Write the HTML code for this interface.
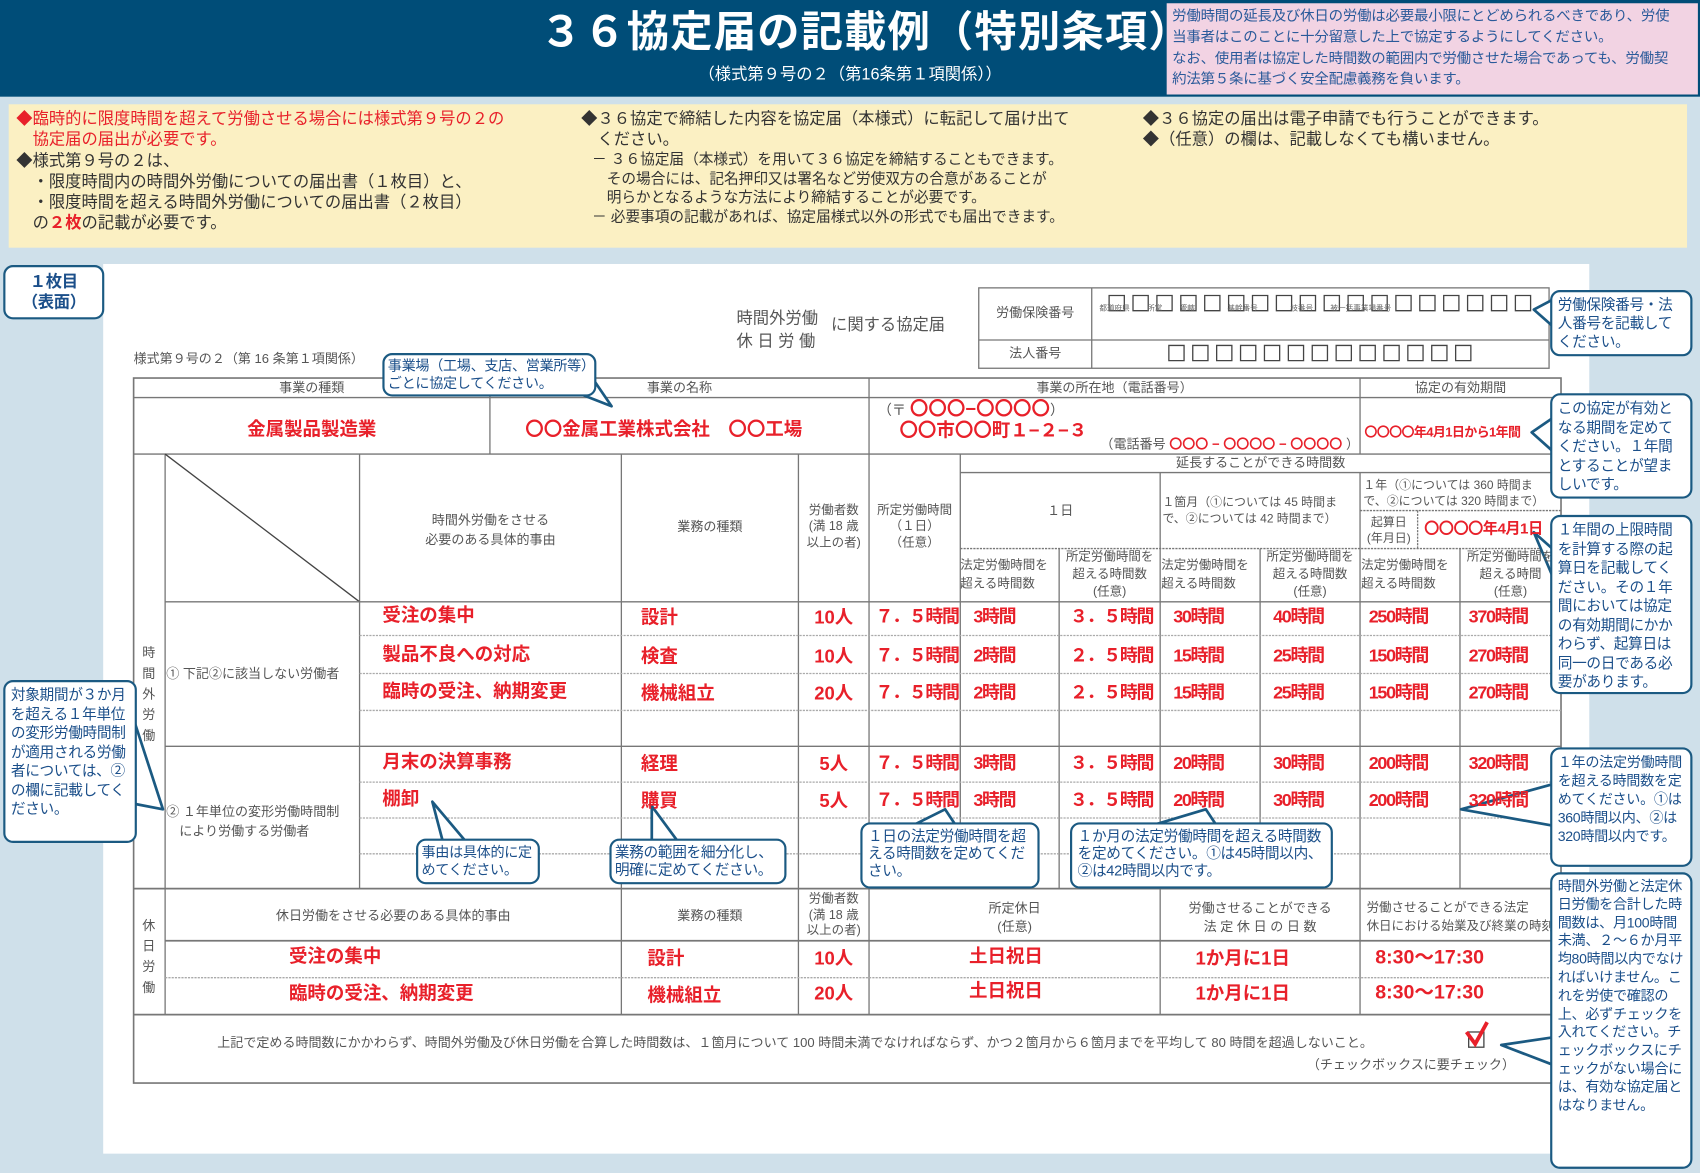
<!DOCTYPE html>
<html><head><meta charset="utf-8"><style>
*{margin:0;padding:0;box-sizing:border-box}
html,body{width:1700px;height:1172px;overflow:hidden;background:#cfe0ea}
body{font-family:"Liberation Sans","Noto Sans CJK JP",sans-serif}
#w{position:absolute;left:0;top:0;width:1565px;height:1080px;transform:scale(1.0863);transform-origin:0 0}
.a{position:absolute;white-space:nowrap;line-height:1.2}
.g{color:#555;font-size:12px}
.r{color:#e8202a;font-weight:bold;font-size:17px}
.n{letter-spacing:-1.2px;font-size:16.5px}
.c{text-align:center}
.co{position:absolute;background:#fff;border:2.5px solid #1b5a82;border-radius:9px;color:#1b4f8a;font-size:13.5px;line-height:1.32;padding:3px 5px;white-space:normal;letter-spacing:-0.3px}
.y{font-size:15px;color:#333;line-height:19.3px}
</style></head><body><div id="w">
<div style="position:absolute;left:0;top:0;width:1565px;height:89px;background:#004d78"></div>
<div class="a" style="left:497px;top:8px;color:#fff;font-size:39px;font-weight:bold;letter-spacing:1px">３６協定届の記載例（特別条項）</div>
<div class="a" style="left:643px;top:60px;color:#fff;font-size:15px">（様式第９号の２（第16条第１項関係））</div>
<div style="position:absolute;left:1074px;top:3px;width:489px;height:84px;background:#f2d3e3;color:#2a5a9a;font-size:13.3px;line-height:18.5px;padding:3px 22px 3px 5px;letter-spacing:-0.2px">労働時間の延長及び休日の労働は必要最小限にとどめられるべきであり、労使当事者はこのことに十分留意した上で協定するようにしてください。<div style="margin-top:2px">なお、使用者は協定した時間数の範囲内で労働させた場合であっても、労働契約法第５条に基づく安全配慮義務を負います。</div></div>

<div style="position:absolute;left:8px;top:96px;width:1545px;height:132px;background:#fbf0c3"></div>
<div class="a y" style="left:15px;top:100px"><span style="color:#e8202a">◆臨時的に限度時間を超えて労働させる場合には様式第９号の２の<br>　協定届の届出が必要です。</span><br>◆様式第９号の２は、<br>　・限度時間内の時間外労働についての届出書（１枚目）と、<br>　・限度時間を超える時間外労働についての届出書（２枚目）<br>　の<b style="color:#e8202a">２枚</b>の記載が必要です。</div>
<div class="a y" style="left:535px;top:100px">◆３６協定で締結した内容を協定届（本様式）に転記して届け出て<br>　ください。</div>
<div class="a" style="left:545px;top:138px;font-size:13.5px;line-height:17.5px;color:#333">－ ３６協定届（本様式）を用いて３６協定を締結することもできます。<br>　その場合には、記名押印又は署名など労使双方の合意があることが<br>　明らかとなるような方法により締結することが必要です。<br>－ 必要事項の記載があれば、協定届様式以外の形式でも届出できます。</div>
<div class="a y" style="left:1052px;top:100px">◆３６協定の届出は電子申請でも行うことができます。<br>◆（任意）の欄は、記載しなくても構いません。</div>

<div style="position:absolute;left:95px;top:243px;width:1368px;height:819px;background:#fff"></div>
<div class="co" style="left:3px;top:244px;width:93px;height:50px;text-align:center;font-weight:bold;font-size:15px;line-height:19px;padding-top:4px">１枚目<br>（表面）</div>

<div class="a" style="left:678px;top:283px;font-size:15px;color:#555;line-height:21px">時間外労働<br>休 日 労 働</div>
<div class="a" style="left:765px;top:291px;font-size:15px;color:#555">に関する協定届</div>
<div class="a g" style="left:123px;top:323px">様式第９号の２（第 16 条第１項関係）</div>

<svg style="position:absolute;left:0;top:0" width="1565" height="1080">
<g stroke="#777" stroke-width="1.2" fill="none">
<rect x="901" y="265" width="525" height="74"/><line x1="901" y1="313" x2="1426" y2="313"/><line x1="1005" y1="265" x2="1005" y2="339"/>
<rect x="123" y="348" width="1314" height="649" stroke-width="1.5"/>
<line x1="123" y1="366" x2="1437" y2="366"/><line x1="123" y1="418" x2="1437" y2="418"/>
<line x1="451" y1="348" x2="451" y2="418"/><line x1="800" y1="348" x2="800" y2="418"/><line x1="1252" y1="348" x2="1252" y2="418"/>
<line x1="152" y1="418" x2="152" y2="934"/>
<line x1="331" y1="418" x2="331" y2="818"/><line x1="572" y1="418" x2="572" y2="934"/><line x1="735" y1="418" x2="735" y2="934"/><line x1="800" y1="418" x2="800" y2="934"/>
<line x1="884" y1="418" x2="884" y2="818"/><line x1="975" y1="505" x2="975" y2="818"/><line x1="1068" y1="435" x2="1068" y2="934"/><line x1="1160" y1="505" x2="1160" y2="818"/><line x1="1252" y1="435" x2="1252" y2="934"/><line x1="1344" y1="505" x2="1344" y2="818"/>
<line x1="884" y1="435" x2="1437" y2="435"/><line x1="884" y1="505" x2="1437" y2="505" stroke-dasharray="2 1"/><line x1="1252" y1="470" x2="1437" y2="470" stroke-dasharray="2 1"/><line x1="1305" y1="470" x2="1305" y2="505" stroke-dasharray="2 1"/>
<line x1="152" y1="418" x2="331" y2="554" stroke="#444"/>
<line x1="152" y1="554" x2="1437" y2="554"/>
<line x1="152" y1="687" x2="1437" y2="687"/>
<line x1="123" y1="818" x2="1437" y2="818" stroke-width="1.6"/>
<line x1="152" y1="866" x2="1437" y2="866" stroke-width="1.6"/>
<line x1="123" y1="934" x2="1437" y2="934" stroke-width="1.6"/>
<g stroke="#aaa" stroke-dasharray="2 1">
<line x1="331" y1="585" x2="1437" y2="585"/><line x1="331" y1="620" x2="1437" y2="620"/><line x1="331" y1="654" x2="1437" y2="654"/>
<line x1="331" y1="720" x2="1437" y2="720"/><line x1="331" y1="753" x2="1437" y2="753"/><line x1="331" y1="786" x2="1437" y2="786"/>
<line x1="152" y1="900" x2="1437" y2="900"/></g>
</g>
<g stroke="#444" stroke-width="1.2" fill="none">
<path d="M1021 272h14v14h-14zM1043 272h14v14h-14zM1065 272h14v14h-14zM1087 272h14v14h-14zM1109 272h14v14h-14zM1131 272h14v14h-14zM1153 272h14v14h-14zM1175 272h14v14h-14zM1197 272h14v14h-14zM1219 272h14v14h-14zM1241 272h14v14h-14zM1263 272h14v14h-14zM1285 272h14v14h-14zM1307 272h14v14h-14zM1329 272h14v14h-14zM1351 272h14v14h-14zM1373 272h14v14h-14zM1395 272h14v14h-14z"/>
<path d="M1076 318h14v14h-14zM1098 318h14v14h-14zM1120 318h14v14h-14zM1142 318h14v14h-14zM1164 318h14v14h-14zM1186 318h14v14h-14zM1208 318h14v14h-14zM1230 318h14v14h-14zM1252 318h14v14h-14zM1274 318h14v14h-14zM1296 318h14v14h-14zM1318 318h14v14h-14zM1340 318h14v14h-14z"/>
<rect x="1352" y="950" width="14" height="14"/></g>
<path d="M1350 950l8 11 11-20" stroke="#e8202a" stroke-width="3.5" fill="none"/>
<g fill="#fff" stroke="#1b5a82" stroke-width="2.5" stroke-linejoin="round">
<path d="M535 363 L563 374 L548 352Z"/>
<path d="M398 738 L408 776 L430 776Z"/>
<path d="M600 742 L600 776 L625 776Z"/>
<path d="M870 745 L840 760 L880 760Z"/>
<path d="M1110 745 L1060 760 L1120 760Z"/>
<path d="M1412 285 L1429 276 L1429 300Z"/>
<path d="M1410 398 L1429 385 L1429 415Z"/>
<path d="M1412 490 L1429 505 L1429 530Z"/>
<path d="M1345 745 L1429 722 L1429 760Z"/>
<path d="M1382 962 L1429 955 L1429 980Z"/>
<path d="M150 745 L124 665 L124 740Z"/>
</g>
</svg>

<div class="a" style="left:1012px;top:281px;font-size:7px;color:#666;word-spacing:14px">都道府県 所掌 管轄 　　基幹番号　　 枝番号 被一括事業場番号</div>
<div class="a g c" style="left:901px;top:281px;width:104px">労働保険番号</div>
<div class="a g c" style="left:901px;top:318px;width:104px">法人番号</div>

<div class="a g c" style="left:123px;top:350px;width:328px">事業の種類</div>
<div class="a g c" style="left:451px;top:350px;width:349px">事業の名称</div>
<div class="a g c" style="left:800px;top:350px;width:452px">事業の所在地（電話番号）</div>
<div class="a g c" style="left:1252px;top:350px;width:185px">協定の有効期間</div>
<div class="a r c" style="left:123px;top:386px;width:328px">金属製品製造業</div>
<div class="a r c" style="left:451px;top:386px;width:320px">〇〇金属工業株式会社　〇〇工場</div>
<div class="a g" style="left:808px;top:367px;font-size:13px">（〒 <span class="r" style="font-size:17px">〇〇〇−〇〇〇〇</span>）</div>
<div class="a r" style="left:828px;top:387px">〇〇市〇〇町１−２−３</div>
<div class="a g" style="left:1013px;top:402px">（電話番号 <span style="color:#e8202a;font-weight:bold;font-size:12px">〇〇〇 − 〇〇〇〇 − 〇〇〇〇</span> ）</div>
<div class="a" style="left:1256px;top:391px;color:#e8202a;font-weight:bold;font-size:12px;letter-spacing:-0.6px">〇〇〇〇年4月1日から1年間</div>

<div class="a g c" style="left:884px;top:419px;width:553px">延長することができる時間数</div>
<div class="a g c" style="left:331px;top:470px;width:241px;line-height:18px">時間外労働をさせる<br>必要のある具体的事由</div>
<div class="a g c" style="left:572px;top:478px;width:163px">業務の種類</div>
<div class="a g c" style="left:735px;top:463px;width:65px;font-size:11.5px;line-height:15px">労働者数<br>(満 18 歳<br>以上の者)</div>
<div class="a g c" style="left:800px;top:463px;width:84px;font-size:11.5px;line-height:15px">所定労働時間<br>（１日）<br>（任意）</div>
<div class="a g c" style="left:884px;top:463px;width:184px">１日</div>
<div class="a g" style="left:1070px;top:456px;font-size:11px;line-height:15px">１箇月（①については 45 時間ま<br>で、②については 42 時間まで）</div>
<div class="a g" style="left:1255px;top:440px;font-size:11px;line-height:15px">１年（①については 360 時間ま<br>で、②については 320 時間まで）</div>
<div class="a g c" style="left:1252px;top:474px;width:53px;font-size:11px;line-height:15px">起算日<br>(年月日)</div>
<div class="a r" style="left:1311px;top:478px;font-size:14px;letter-spacing:-0.5px">〇〇〇〇年4月1日</div>
<div class="a g" style="left:884px;top:513px;font-size:11.5px;line-height:17px">法定労働時間を<br>超える時間数</div>
<div class="a g c" style="left:975px;top:505px;width:93px;font-size:11.5px;line-height:16px">所定労働時間を<br>超える時間数<br>(任意)</div>
<div class="a g" style="left:1069px;top:513px;font-size:11.5px;line-height:17px">法定労働時間を<br>超える時間数</div>
<div class="a g c" style="left:1160px;top:505px;width:92px;font-size:11.5px;line-height:16px">所定労働時間を<br>超える時間数<br>(任意)</div>
<div class="a g" style="left:1253px;top:513px;font-size:11.5px;line-height:17px">法定労働時間を<br>超える時間数</div>
<div class="a g c" style="left:1344px;top:505px;width:93px;font-size:11.5px;line-height:16px;overflow:hidden">所定労働時間を<br>超える時間<br>(任意)</div>

<div class="a g" style="left:131px;top:592px;line-height:19px;width:14px;white-space:normal">時間外労働</div>
<div class="a g" style="left:153px;top:613px">① 下記②に該当しない労働者</div>
<div class="a g" style="left:153px;top:738px;line-height:18px">② １年単位の変形労働時間制<br>　により労働する労働者</div>
<div class="a g" style="left:131px;top:843px;line-height:19px;width:14px;white-space:normal">休日労働</div>

<div id="rows"></div>
<script>
var R=[[557,"受注の集中","設計","10人","3","3.5","30","40","250","370"],[593,"製品不良への対応","検査","10人","2","2.5","15","25","150","270"],[627,"臨時の受注、納期変更","機械組立","20人","2","2.5","15","25","150","270"],[692,"月末の決算事務","経理","5人","3","3.5","20","30","200","320"],[726,"棚卸","購買","5人","3","3.5","20","30","200","320"]];
var h="";R.forEach(function(r){var t=r[0];
h+='<div class="a r" style="left:352px;top:'+t+'px">'+r[1]+'</div>';
h+='<div class="a r" style="left:590px;top:'+(t+2)+'px">'+r[2]+'</div>';
h+='<div class="a r c" style="left:735px;top:'+(t+2)+'px;width:65px">'+r[3]+'</div>';
h+='<div class="a r n" style="left:806px;top:'+(t+2)+'px;width:78px;overflow:hidden">７．５時間</div>';
var xs=[884,975,1068,1160,1252,1344],ws=[91,93,92,92,92,93];
var vs=[r[4]+"時間",(r[5]=="3.5"?"３．５":"２．５")+"時間",r[6]+"時間",r[7]+"時間",r[8]+"時間",r[9]+"時間"];
for(var i=0;i<6;i++)h+='<div class="a r n" style="left:'+(xs[i]+(i==1?10:(i>=4?8:12)))+'px;top:'+(t+2)+'px;width:'+(ws[i]-8)+'px;overflow:hidden">'+vs[i]+'</div>';
});
document.getElementById("rows").innerHTML=h;
</script>

<div class="a g c" style="left:152px;top:836px;width:420px">休日労働をさせる必要のある具体的事由</div>
<div class="a g c" style="left:572px;top:836px;width:163px">業務の種類</div>
<div class="a g c" style="left:735px;top:821px;width:65px;font-size:11.5px;line-height:14.5px">労働者数<br>(満 18 歳<br>以上の者)</div>
<div class="a g c" style="left:800px;top:828px;width:268px;line-height:17px">所定休日<br>(任意)</div>
<div class="a g c" style="left:1068px;top:828px;width:184px;line-height:17px">労働させることができる<br>法 定 休 日 の 日 数</div>
<div class="a g" style="left:1258px;top:828px;width:179px;line-height:17px;overflow:hidden;font-size:11.5px">労働させることができる法定<br>休日における始業及び終業の時刻</div>
<div class="a r" style="left:266px;top:871px">受注の集中</div>
<div class="a r" style="left:596px;top:873px">設計</div>
<div class="a r c" style="left:735px;top:873px;width:65px">10人</div>
<div class="a r c" style="left:800px;top:871px;width:252px">土日祝日</div>
<div class="a r c" style="left:1068px;top:873px;width:152px">1か月に1日</div>
<div class="a r" style="left:1266px;top:871px;font-size:18px">8:30～17:30</div>
<div class="a r" style="left:266px;top:905px">臨時の受注、納期変更</div>
<div class="a r" style="left:596px;top:907px">機械組立</div>
<div class="a r c" style="left:735px;top:905px;width:65px">20人</div>
<div class="a r c" style="left:800px;top:903px;width:252px">土日祝日</div>
<div class="a r c" style="left:1068px;top:905px;width:152px">1か月に1日</div>
<div class="a r" style="left:1266px;top:903px;font-size:18px">8:30～17:30</div>
<div class="a g" style="left:200px;top:953px;font-size:12px">上記で定める時間数にかかわらず、時間外労働及び休日労働を合算した時間数は、１箇月について 100 時間未満でなければならず、かつ２箇月から６箇月までを平均して 80 時間を超過しないこと。</div>
<div class="a g" style="left:1203px;top:973px">（チェックボックスに要チェック）</div>

<div class="co" style="left:352px;top:325px;width:197px;height:40px;line-height:16px;padding:2px 3px;font-size:13px">事業場（工場、支店、営業所等）ごとに協定してください。</div>
<div class="co" style="left:383px;top:772px;width:114px;height:42px;line-height:16px;font-size:13px;padding:3px 3px">事由は具体的に定めてください。</div>
<div class="co" style="left:561px;top:772px;width:163px;height:42px;line-height:16px;padding:3px 3px">業務の範囲を細分化し、明確に定めてください。</div>
<div class="co" style="left:792px;top:757px;width:165px;height:61px;line-height:16px">１日の法定労働時間を超える時間数を定めてください。</div>
<div class="co" style="left:985px;top:757px;width:242px;height:61px;line-height:16px">１か月の法定労働時間を超える時間数を定めてください。①は45時間以内、②は42時間以内です。</div>
<div class="co" style="left:1427px;top:267px;width:131px;height:61px;line-height:17px">労働保険番号・法人番号を記載してください。</div>
<div class="co" style="left:1427px;top:362px;width:131px;height:97px;line-height:17.5px">この協定が有効となる期間を定めてください。１年間とすることが望ましいです。</div>
<div class="co" style="left:1427px;top:474px;width:131px;height:165px;line-height:17.5px">１年間の上限時間を計算する際の起算日を記載してください。その１年間においては協定の有効期間にかかわらず、起算日は同一の日である必要があります。</div>
<div class="co" style="left:1427px;top:688px;width:131px;height:110px;line-height:17px;font-size:13px">１年の法定労働時間を超える時間数を定めてください。①は360時間以内、②は320時間以内です。</div>
<div class="co" style="left:1427px;top:803px;width:131px;height:273px;line-height:16.8px;font-size:13px">時間外労働と法定休日労働を合計した時間数は、月100時間未満、２～６か月平均80時間以内でなければいけません。これを労使で確認の上、必ずチェックを入れてください。チェックボックスにチェックがない場合には、有効な協定届とはなりません。</div>
<div class="co" style="left:3px;top:626px;width:123px;height:150px;line-height:17.5px">対象期間が３か月を超える１年単位の変形労働時間制が適用される労働者については、②の欄に記載してください。</div>
</div></body></html>
